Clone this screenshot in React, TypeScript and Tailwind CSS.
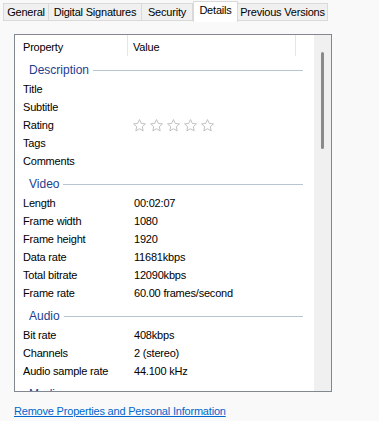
import React from "react";

const tabs = ["General", "Digital Signatures", "Security", "Details", "Previous Versions"];
const tabW = ["w-[46px]", "w-[94px]", "w-[52px]", "w-[45px]", "w-[91px]"];

type Row = [string, string?];

const sections: { title: string; rows: Row[] }[] = [
  { title: "Description", rows: [["Title"], ["Subtitle"], ["Rating", "*"], ["Tags"], ["Comments"]] },
  {
    title: "Video",
    rows: [
      ["Length", "00:02:07"],
      ["Frame width", "1080"],
      ["Frame height", "1920"],
      ["Data rate", "11681kbps"],
      ["Total bitrate", "12090kbps"],
      ["Frame rate", "60.00 frames/second"],
    ],
  },
  {
    title: "Audio",
    rows: [
      ["Bit rate", "408kbps"],
      ["Channels", "2 (stereo)"],
      ["Audio sample rate", "44.100 kHz"],
    ],
  },
  { title: "Media", rows: [] },
];

function Star() {
  return (
    <svg width="15" height="15" viewBox="0 0 24 24" fill="none" stroke="#bdbdbd" strokeWidth="1.5" strokeLinejoin="round">
      <path d="M12 2.5l2.9 6.2 6.6.7-5 4.5 1.4 6.6L12 17.2l-5.9 3.3 1.4-6.6-5-4.5 6.6-.7z" />
    </svg>
  );
}

export default function App() {
  return (
    <div className="w-[379px] h-[421px] bg-[#f9f9f9] text-[11px] tracking-[-0.2px] text-black overflow-hidden" style={{ fontFamily: '"Liberation Sans", Arial, sans-serif' }}>
      {/* tabs */}
      <div className="flex h-[21px] pl-[3px] items-end">
        {tabs.map((t, i) =>
          t === "Details" ? (
            <div key={t} className={`${tabW[i]} h-[21px] bg-white border border-b-0 border-[#d9d9d9] flex items-center justify-center -mb-px relative z-10 pb-[3px]`}>
              {t}
            </div>
          ) : (
            <div key={t} className={`${tabW[i]} h-[18px] bg-[#f0f0f0] border border-[#d9d9d9] -ml-px first:ml-0 flex items-center justify-center`}>
              {t}
            </div>
          )
        )}
      </div>

      {/* list box */}
      <div className="ml-[14px] mt-[13px] w-[318px] h-[358px] border border-[#828790] bg-white flex overflow-hidden">
        <div className="flex-1 overflow-hidden">
          <div className="flex h-[21px] items-center">
            <div className="w-[113px] pl-[8px] pt-[3px] border-r border-[#e5e5e5] h-full flex items-center">Property</div>
            <div className="w-[168px] pl-[5px] pt-[3px] border-r border-[#e5e5e5] h-full flex items-center">Value</div>
          </div>
          {sections.map((s) => (
            <div key={s.title}>
              <div className="h-[24px] flex items-center pt-[4px] pl-[14px] pr-[11px] gap-[4px]">
                <span className="text-[12px] tracking-normal text-[#1e3d8f]">{s.title}</span>
                <div className="flex-1 h-px bg-[#b7c4d2]" />
              </div>
              {s.rows.map(([k, v]) => (
                <div key={k} className="flex h-[18px] items-center">
                  <div className="w-[119px] pl-[8px]">{k}</div>
                  <div className="flex items-center">
                    {v === "*" ? (
                      <div className="flex gap-[2px] -ml-[2px]">
                        <Star />
                        <Star />
                        <Star />
                        <Star />
                        <Star />
                      </div>
                    ) : (
                      v
                    )}
                  </div>
                </div>
              ))}
            </div>
          ))}
        </div>
        <div className="w-[17px] bg-[#f0f0f0] pt-[17px] flex justify-center">
          <div className="w-[3px] h-[97px] bg-[#8a8a8a] rounded-full" />
        </div>
      </div>

      <div className="pl-[14px] mt-[11px]">
        <span className="text-[#0066cc] underline">Remove Properties and Personal Information</span>
      </div>
    </div>
  );
}
